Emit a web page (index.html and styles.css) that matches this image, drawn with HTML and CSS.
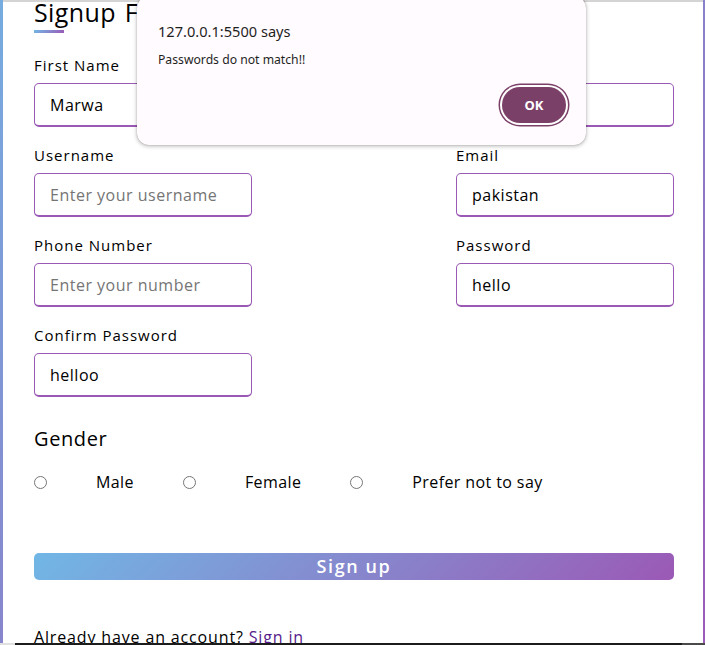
FILE: index.html
```html
<!DOCTYPE html>
<html lang="en">
<head>
<meta charset="utf-8">
<title>Signup Form</title>
<link rel="stylesheet" href="styles.css">
</head>
<body>
<div class="page">
  <div class="container">
    <div class="title">Signup Form</div>
    <div class="title-bar"></div>
    <form class="form">
      <div class="details">
        <div class="field"><label class="lbl">First Name</label><input class="inp" type="text" value="Marwa"></div>
        <div class="field"><label class="lbl">Last Name</label><input class="inp" type="text" value="Ali"></div>
        <div class="field"><label class="lbl">Username</label><input class="inp" type="text" placeholder="Enter your username"></div>
        <div class="field"><label class="lbl">Email</label><input class="inp" type="text" value="pakistan"></div>
        <div class="field"><label class="lbl">Phone Number</label><input class="inp" type="text" placeholder="Enter your number"></div>
        <div class="field"><label class="lbl">Password</label><input class="inp" type="text" value="hello"></div>
        <div class="field"><label class="lbl">Confirm Password</label><input class="inp" type="text" value="helloo"></div>
      </div>
      <div class="gender-title">Gender</div>
      <div class="gender">
        <input class="radio" type="radio" name="gender" id="g1"><label class="opt" for="g1">Male</label>
        <input class="radio" type="radio" name="gender" id="g2"><label class="opt" for="g2">Female</label>
        <input class="radio" type="radio" name="gender" id="g3"><label class="opt" for="g3">Prefer not to say</label>
      </div>
      <button class="submit" type="button">Sign up</button>
      <div class="signin">Already have an account? <a class="link" href="#">Sign in</a></div>
    </form>
  </div>
  <div class="taskbar"><span class="tb-a"></span><span class="tb-b"></span><span class="tb-c"></span></div>
  <div class="dialog">
    <div class="dlg-title">127.0.0.1:5500 says</div>
    <div class="dlg-msg">Passwords do not match!!</div>
    <div class="dlg-actions"><button class="dlg-ok" type="button">OK</button></div>
  </div>
</div>
</body>
</html>
```
FILE: styles.css
```css
html, body {
  margin: 0;
  padding: 0;
}
body {
  font-family: "Open Sans", sans-serif;
  color: #000;
}
.page {
  position: relative;
  height: 645px;
  display: flex;
  flex-direction: column;
  overflow: hidden;
  background: linear-gradient(135deg, #76acdf, #9b5bb8);
}
.container {
  flex: 1;
  min-height: 0;
  overflow: hidden;
  margin: 0 2px 0 3px;
  background: #fff;
  border-top: 2px solid #d4d4d4;
  padding: 0 29px 0 31px;
}
.title {
  font-size: 25px;
  font-weight: 500;
  line-height: 30px;
  letter-spacing: 0.4px;
  word-spacing: 2px;
  margin-top: -5px;
  white-space: nowrap;
}
.title-bar {
  width: 30px;
  height: 3px;
  margin-top: 3px;
  background: linear-gradient(135deg, #71b7e6, #9b59b6);
}
.form {
  margin: 0;
}
.details {
  margin-top: 21px;
  display: grid;
  grid-template-columns: 218px 218px;
  justify-content: space-between;
  row-gap: 17px;
}
.field {
  display: flex;
  flex-direction: column;
  gap: 7px;
}
.lbl {
  font-size: 15px;
  font-weight: 500;
  line-height: 22px;
  letter-spacing: 1px;
}
.inp {
  height: 44px;
  box-sizing: border-box;
  width: 100%;
  margin: 0;
  border: 1px solid #9b59b6;
  border-bottom-width: 2px;
  border-radius: 5px;
  padding: 0 15px;
  font-family: "Open Sans", sans-serif;
  font-size: 16px;
  font-weight: 500;
  letter-spacing: 0.5px;
  color: #000;
  background: #fff;
  outline: none;
}
.inp::placeholder {
  color: #757575;
}
.gender-title {
  margin-top: 28px;
  font-size: 20px;
  font-weight: 500;
  line-height: 28px;
  letter-spacing: 0.6px;
}
.gender {
  margin-top: 17px;
  display: flex;
  align-items: center;
  gap: 49px;
  height: 24px;
  font-size: 16px;
  line-height: 24px;
}
.radio {
  margin: 0;
  width: 13px;
  height: 13px;
}
.opt {
  font-weight: 500;
  letter-spacing: 0.4px;
}
.submit {
  display: block;
  margin-top: 59px;
  width: 100%;
  height: 27px;
  padding: 0;
  border: none;
  border-radius: 5px;
  background: linear-gradient(135deg, #71b7e6, #9b59b6);
  color: #fff;
  font-family: "Open Sans", sans-serif;
  font-size: 18px;
  font-weight: 600;
  letter-spacing: 1.6px;
  line-height: 27px;
}
.signin {
  margin-top: 45px;
  font-size: 16px;
  font-weight: 500;
  line-height: 24px;
  letter-spacing: 0.85px;
}
.link {
  color: #551a8b;
  text-decoration: none;
}
.taskbar {
  height: 2px;
  display: flex;
  flex: none;
}
.tb-a { width: 15px; background: #e0e0e0; }
.tb-b { width: 667px; background: #1c1c1c; }
.tb-c { flex: 1; background: #4a4a4a; }

.dialog {
  position: absolute;
  left: 137px;
  top: -4px;
  width: 449px;
  height: 149px;
  box-sizing: border-box;
  padding: 25px 20px 0 21px;
  background: #fffbfe;
  border-radius: 12px;
  box-shadow: 0 1px 4px rgba(0, 0, 0, 0.3), 0 0 1px rgba(0, 0, 0, 0.35);
  font-family: "Noto Sans", sans-serif;
  color: #1f1f1f;
}
.dlg-title {
  font-size: 14.6px;
  line-height: 20px;
}
.dlg-msg {
  margin-top: 10px;
  font-size: 12.2px;
  line-height: 18px;
}
.dlg-actions {
  display: flex;
  justify-content: flex-end;
  margin-top: 18px;
}
.dlg-ok {
  width: 64px;
  height: 36px;
  padding: 0;
  border: none;
  border-radius: 18px;
  background: #7b4068;
  color: #fff;
  font-family: "Noto Sans", sans-serif;
  font-size: 13px;
  font-weight: 700;
  box-shadow: 0 0 0 2px #fff, 0 0 0 3.5px #7b4068;
}
```
